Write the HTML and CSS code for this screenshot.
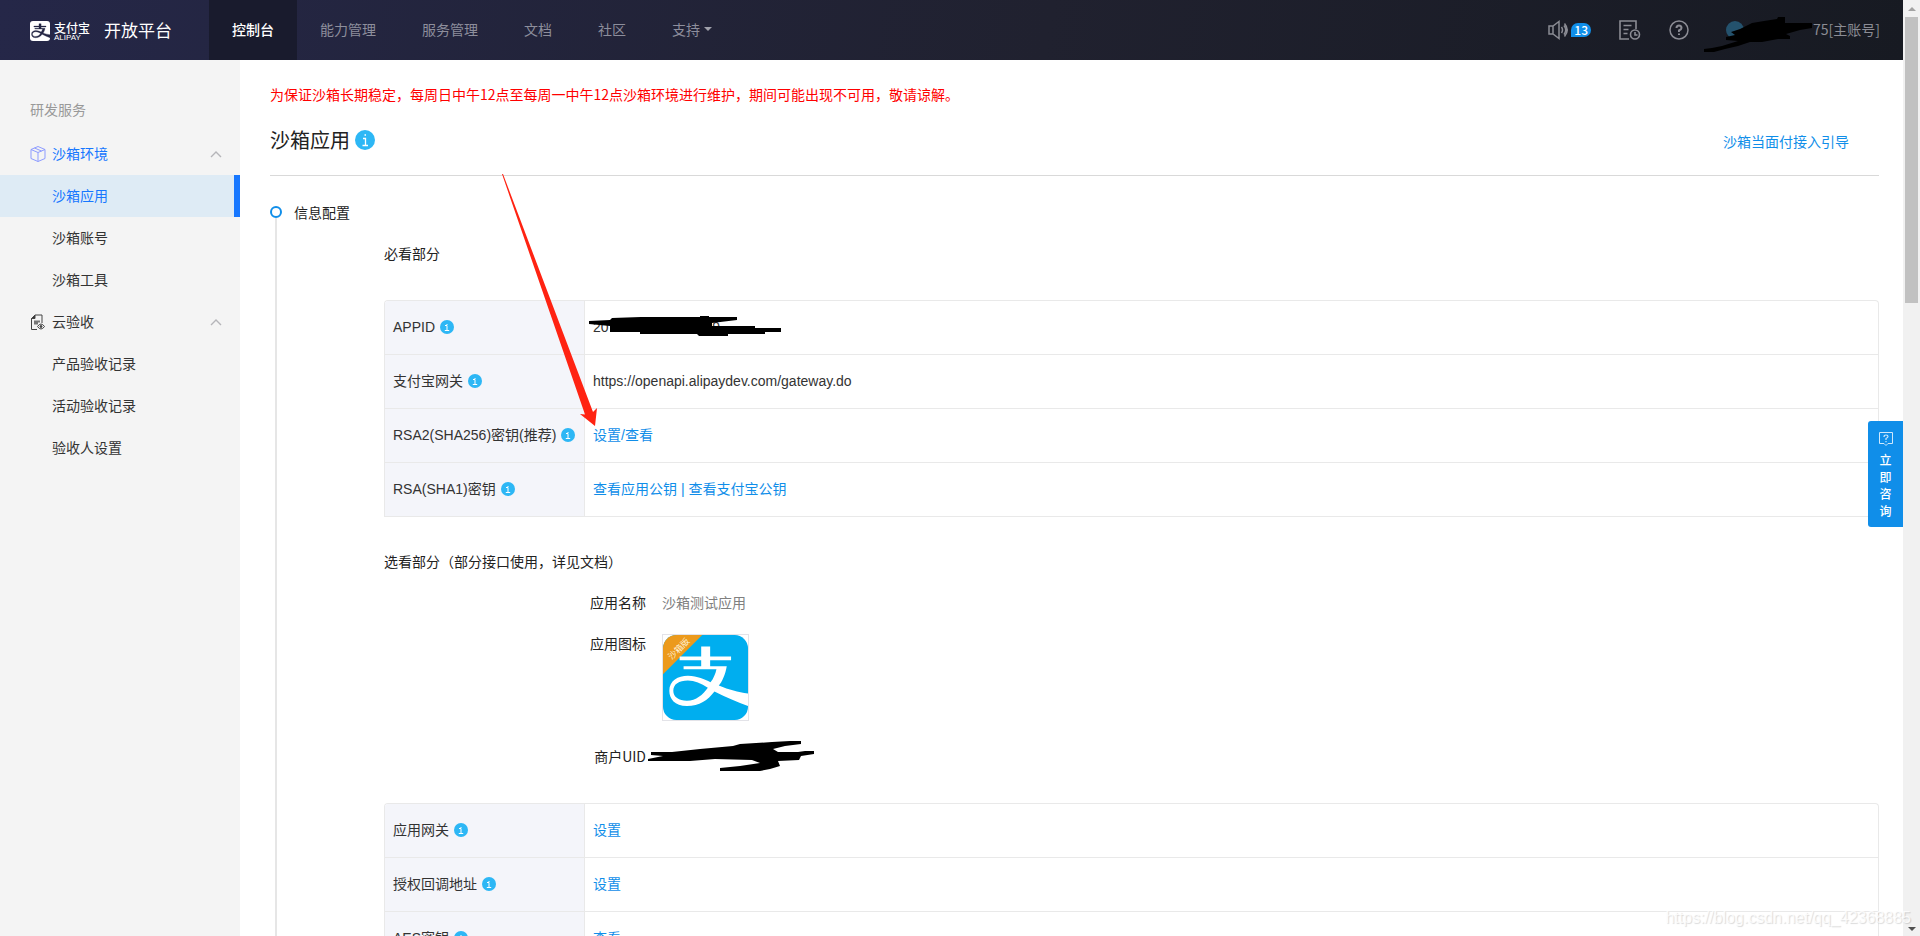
FILE: index.html
```html
<!DOCTYPE html>
<html lang="zh-CN">
<head>
<meta charset="utf-8">
<title>沙箱应用 - 开放平台</title>
<link rel="stylesheet" href="styles.css">
</head>
<body>
<svg class="defs" aria-hidden="true">
  <symbol id="zhi" viewBox="0 0 256 256">
    <path fill-rule="evenodd" d="M115 35H142V65H205V76H142V94H192C188 118 178 142 168 152C200 165 225 172 256 176V214C225 203 190 187 155 170C135 196 110 214 72 214C35 214 19 192 19 168C19 138 45 123 75 123C105 123 125 135 143 142C152 132 158 116 161 103H62V94H115V76H50V65H115ZM135 159C115 146 95 137 75 137C48 137 31 148 31 168C31 187 48 198 72 198C100 198 120 180 135 159Z"/>
  </symbol>
  <symbol id="info" viewBox="0 0 14 14">
    <circle cx="7" cy="7" r="7" fill="#2db7f5"/>
    <path d="M5 5.5h2v5M4.8 10.5h4.4M6.5 4.5h1" fill="none" stroke="#fff"/>
  </symbol>
  <symbol id="up" viewBox="0 0 12 8"><path d="M1 7l5-5 5 5" fill="none" stroke="#b5b5b9" stroke-width="1.4"/></symbol>
</svg>
<div class="window">
  <div class="page">
    <header class="topbar">
      <a class="brand" href="#">
        <svg class="brand-mark" viewBox="0 0 20 20"><rect width="20" height="20" rx="3" fill="#fff"/><use href="#zhi" width="20" height="20" fill="#242644" stroke="#242644" stroke-width="4"/></svg>
        <span class="brand-words"><b>支付宝</b><small>ALIPAY</small></span>
        <span class="brand-title">开放平台</span>
      </a>
      <nav class="nav">
        <a class="active" href="#">控制台</a>
        <a href="#">能力管理</a>
        <a href="#">服务管理</a>
        <a href="#">文档</a>
        <a href="#">社区</a>
        <a href="#">支持<i class="caret"></i></a>
      </nav>
      <div class="tools">
        <button class="tool" aria-label="消息">
          <svg width="21" height="20" viewBox="0 0 21 20" fill="none" stroke="#8b8c94" stroke-width="1.5"><path d="M1 6h4l6-4.500v17L5 14H1zM5 6v8M13.500 7q2 3 0 6M16 5.500q3.500 4.500 0 9M16.500 3.500q5.500 6.500 0 13"/></svg>
          <span class="badge">13</span>
        </button>
        <button class="tool" aria-label="工单">
          <svg width="22" height="20" viewBox="0 0 22 20" fill="none" stroke="#8b8c94" stroke-width="1.600"><path d="M10 19H1V1h16v8M4.500 5.500h8M4.500 9.500h5M4.500 13.500h4"/><circle cx="16" cy="14.500" r="4.500"/><path d="M16 12v3h2.500"/></svg>
        </button>
        <button class="tool" aria-label="帮助">
          <svg width="20" height="20" viewBox="0 0 20 20" fill="none" stroke="#8b8c94" stroke-width="1.500"><circle cx="10" cy="10" r="9"/><path d="M7.500 8q0-2.500 2.500-2.500T12.500 8q0 1.500-2.500 2.500v1.500M10 13.500V15" stroke-width="2"/></svg>
        </button>
        <a class="account" href="#">
          <i class="avatar"></i>
          <span>75[主账号]</span>
          <svg class="scribble scribble-account" viewBox="1700 15 116 40"><path d="M1704 50L1712 49L1722 47L1738 42L1726 41V38L1735 36L1731 33L1740 30L1752 24L1764 22L1777 20L1778 18H1785V24H1812V29L1800 31L1786 35L1790 37V40H1778L1762 43H1750L1738 47L1725 50L1714 53H1704Z"/></svg>
        </a>
      </div>
    </header>
    <div class="body">
      <aside class="sidebar">
        <h2>研发服务</h2>
        <a class="group current" href="#">
          <svg width="16" height="16" viewBox="0 0 16 16" fill="none" stroke="#8d9bff"><path d="M8 .5l7 3v9l-7 3-7-3v-9zM1 3.500l7 3 7-3M8 6.500v9M4.500 2l7 3"/></svg>
          <span>沙箱环境</span><svg class="up"><use href="#up"/></svg>
        </a>
        <a class="item selected" href="#">沙箱应用</a>
        <a class="item" href="#">沙箱账号</a>
        <a class="item" href="#">沙箱工具</a>
        <a class="group" href="#">
          <svg width="16" height="16" viewBox="0 0 16 16" fill="none" stroke="#444"><path d="M7 15.500H1.500V4.500L5 1h7v8"/><path d="M1.500 4.500L5 1v3.500z" fill="#333"/><path d="M4 7.500h6M4 9.500h4" stroke="#777" stroke-width="2"/><path d="M7.500 12.500q3.500-5 7 0-3.500 5-7 0z" fill="#f4f4f4"/><circle cx="11" cy="12.500" r="1" fill="#444"/></svg>
          <span>云验收</span><svg class="up"><use href="#up"/></svg>
        </a>
        <a class="item" href="#">产品验收记录</a>
        <a class="item" href="#">活动验收记录</a>
        <a class="item" href="#">验收人设置</a>
      </aside>
      <main class="content">
        <p class="notice">为保证沙箱长期稳定，每周日中午12点至每周一中午12点沙箱环境进行维护，期间可能出现不可用，敬请谅解。</p>
        <div class="heading">
          <h1>沙箱应用</h1>
          <svg width="20" height="20" viewBox="0 0 20 20"><circle cx="10" cy="10" r="10" fill="#2db7f5"/><path d="M8 8.500h2.500v7M7.500 15.500h5.500M9.500 5h1.500" fill="none" stroke="#fff" stroke-width="1.300"/></svg>
          <a class="guide" href="#">沙箱当面付接入引导</a>
        </div>
        <section class="step">
          <div class="rail"><i class="dot"></i></div>
          <div class="step-main">
            <h2>信息配置</h2>
            <div class="detail">
              <h3>必看部分</h3>
              <div class="frame">
                <table>
                  <tr><th scope="row">APPID<svg class="tip"><use href="#info"/></svg></th><td><span class="masked"><span>20</span><span>89</span><svg class="scribble scribble-appid" viewBox="587 312 196 26"><path d="M589 320L610 319L612 317L641 316H700V315H709V316H737V319L712 322V325H755V327H781V331H765V333H728V335H699L697 333H640V331H610V325L589 323Z"/></svg></span></td></tr>
                  <tr><th scope="row">支付宝网关<svg class="tip"><use href="#info"/></svg></th><td>https://openapi.alipaydev.com/gateway.do</td></tr>
                  <tr><th scope="row">RSA2(SHA256)密钥(推荐)<svg class="tip"><use href="#info"/></svg></th><td><a href="#">设置/查看</a></td></tr>
                  <tr><th scope="row">RSA(SHA1)密钥<svg class="tip"><use href="#info"/></svg></th><td class="links"><a href="#">查看应用公钥</a> | <a href="#">查看支付宝公钥</a></td></tr>
                </table>
              </div>
              <h3 class="optional">选看部分（部分接口使用，详见文档）</h3>
              <dl class="facts">
                <dt>应用名称</dt><dd>沙箱测试应用</dd>
                <dt>应用图标</dt>
                <dd class="icon-cell"><svg class="app-icon" viewBox="0 0 256 256"><defs><clipPath id="round"><rect width="256" height="256" rx="40"/></clipPath></defs><g clip-path="url(#round)"><rect width="256" height="256" fill="#00aeef"/><path d="M0 0H118L0 118Z" fill="#ec9a1c"/><use href="#zhi" width="256" height="256" fill="#fff"/></g><text x="47" y="51" transform="rotate(-45 47 41)" text-anchor="middle">沙箱版</text></svg></dd>
                <dt>商户UID</dt>
                <dd class="uid"><svg class="scribble scribble-uid" viewBox="646 740 170 34"><path d="M651 753H672L700 750L733 747L740 745L772 743L790 742H801V745L785 747L773 750L778 753L798 753L805 752H814V755L801 757L799 761L778 762L780 767L770 770L760 772H720V769L740 767L760 764L752 761L715 760L690 762H648V760L663 757L651 756Z"/></svg></dd>
              </dl>
              <div class="frame">
                <table>
                  <tr><th scope="row">应用网关<svg class="tip"><use href="#info"/></svg></th><td><a href="#">设置</a></td></tr>
                  <tr><th scope="row">授权回调地址<svg class="tip"><use href="#info"/></svg></th><td><a href="#">设置</a></td></tr>
                  <tr><th scope="row">AES密钥<svg class="tip"><use href="#info"/></svg></th><td><a href="#">查看</a></td></tr>
                </table>
              </div>
            </div>
          </div>
        </section>
        <svg class="arrow" viewBox="500 172 98 256"><path d="M502 174H503L593 412L597 408L595 426L580 414L585 414.500Z" fill="#ff2312"/></svg>
      </main>
    </div>
    <button class="consult">
      <svg width="14" height="14" viewBox="0 0 14 14" fill="none" stroke="#cfe8fc"><path d="M.5 .5h13v11H9l-2 2-2-2H.5z"/><path d="M5 5q0-2 2-2t2 1.500q0 1-2 2V8M7 9v1.200" stroke-width="1.200"/></svg>
      <span>立</span><span>即</span><span>咨</span><span>询</span>
    </button>
  </div>
  <div class="scrollbar" aria-hidden="true"><i class="arrow-up"></i><i class="thumb"></i><i class="arrow-down"></i></div>
  <div class="watermark">https://blog.csdn.net/qq_42368885</div>
</div>
</body>
</html>
```
FILE: styles.css
```css
* { box-sizing: border-box; }
body {
  margin: 0;
  font: 400 14px/20px "Noto Sans CJK SC", sans-serif;
  color: #222;
  background: #fff;
}
a { color: #108ee9; text-decoration: none; }
h1, h2, h3, p, dl, dd { margin: 0; font-weight: inherit; }
h2, h3 { font-size: 14px; }
svg { display: block; flex: none; }
button { border: 0; padding: 0; background: none; font: inherit; cursor: pointer; }
.defs { display: none; }

.window { position: relative; display: flex; height: 100vh; overflow: hidden; }
.page { position: relative; flex: 1; display: flex; flex-direction: column; min-width: 0; }

.topbar {
  flex: none;
  display: flex;
  height: 60px;
  background: linear-gradient(100deg, #252748 0%, #20212f 55%, #171a22 100%);
}
.brand { display: flex; align-items: center; width: 209px; padding-left: 30px; color: #fff; }
.brand-mark { width: 20px; height: 20px; margin-top: 2px; }
.brand-words { display: flex; flex-direction: column; margin: 1px 14px 0 4px; }
.brand-words b { font-size: 12px; font-weight: 500; line-height: 13px; }
.brand-words small { font: 8px/7px "Liberation Sans", sans-serif; }
.brand-title { padding-bottom: 1px; font-size: 17px; }
.nav { display: flex; }
.nav a { display: flex; align-items: center; padding: 0 23px 2px; color: #8d8e9c; }
.nav .active { background: #191b2d; color: #fff; font-weight: 500; }
.caret { margin-left: 4px; border: 4px solid transparent; border-top-color: #a0a1ab; border-bottom: 0; }

.tools { display: flex; align-items: center; gap: 28px; margin-left: auto; padding-right: 23px; }
.tool { display: flex; align-items: center; gap: 2px; }
.badge {
  padding: 0 3px;
  border-radius: 7px 7px 7px 0;
  background: #108ee9;
  color: #fff;
  font-size: 12px;
  font-weight: 500;
  line-height: 14px;
}
.account { position: relative; display: flex; align-items: center; justify-content: space-between; width: 154px; margin-left: 9px; color: #8b8c94; }
.account span { padding-bottom: 2px; }
.avatar { width: 18px; height: 18px; border-radius: 50%; background: #24526d; }
.scribble { position: absolute; fill: #000; }
.scribble-account { left: -26px; top: -5px; width: 116px; height: 40px; }

.body { flex: 1; display: flex; min-height: 0; }
.sidebar { flex: none; width: 240px; padding-top: 29px; background: #f4f4f4; }
.sidebar h2 { padding: 10px 30px 12px; margin-bottom: 2px; color: #999; }
.sidebar a { display: flex; align-items: center; height: 42px; color: #333; }
.group { gap: 6px; padding: 0 18px 0 30px; }
.group span { padding-bottom: 2px; }
.up { width: 12px; height: 8px; margin-left: auto; }
.sidebar .item { padding: 0 0 2px 52px; }
.sidebar .current, .sidebar .selected { color: #1677ff; }
.sidebar .selected { background: #deebf5; border-right: 6px solid #1677ff; }

.content { position: relative; flex: 1; min-width: 0; padding: 24px 24px 0 30px; }
.notice { color: #f00; }
.heading { display: flex; align-items: center; height: 72px; border-bottom: 1px solid #d9d9d9; gap: 5px; }
.heading h1 { font-size: 20px; }
.guide { margin: 2px 30px 0 auto; }
.step { display: flex; gap: 12px; padding-top: 26px; }
.rail { display: flex; flex-direction: column; align-items: center; width: 12px; padding-top: 4px; }
.rail::after { content: ""; flex: 1; width: 2px; background: #e6e6e6; }
.dot { width: 12px; height: 12px; border: 2px solid #108ee9; border-radius: 50%; }
.step-main { flex: 1; min-width: 0; }
.detail { margin: 21px 0 0 90px; }
.frame { margin-top: 37px; border: 1px solid #e9e9e9; border-bottom: 0; border-radius: 4px 4px 0 0; overflow: hidden; }
table { width: 100%; border-collapse: separate; border-spacing: 0; table-layout: fixed; font-family: "Liberation Sans", "Noto Sans CJK SC", sans-serif; }
th, td { height: 54px; padding: 0 8px 1px; border-bottom: 1px solid #e9e9e9; text-align: left; font-weight: inherit; white-space: nowrap; color: #333; }
th { width: 200px; background: #f4f5fa; border-right: 1px solid #e9e9e9; }
.tip { display: inline-block; width: 14px; height: 14px; margin-left: 5px; vertical-align: -2px; }
td.links { color: #108ee9; }
.masked { position: relative; display: inline-flex; gap: 96px; }
.scribble-appid { left: -6px; top: -4px; width: 196px; height: 26px; }
.optional { margin-top: 34px; }
.facts { display: grid; grid-template-columns: 262px 1fr; column-gap: 16px; row-gap: 21px; margin-top: 21px; }
.facts dt { text-align: right; }
.facts dd { color: #808080; }
.facts .icon-cell { padding: 1px 0 4px; }
.app-icon { width: 87px; height: 87px; border: 1px solid #e3e3e8; }
.app-icon text { font-size: 26px; fill: #fff3da; }
.uid { position: relative; }
.scribble-uid { left: -16px; top: -7px; width: 170px; height: 34px; }
.arrow { position: absolute; left: 260px; top: 112px; width: 98px; height: 256px; }

.consult {
  position: absolute;
  right: 0;
  top: 45%;
  display: flex;
  flex-direction: column;
  align-items: center;
  width: 35px;
  padding: 11px 0 8px;
  border-radius: 3px 0 0 3px;
  background: #108ee9;
  color: #fff;
  font-size: 12px;
  font-weight: 500;
  line-height: 17px;
}
.consult svg { margin-bottom: 5px; }

.scrollbar { flex: none; display: flex; flex-direction: column; align-items: center; width: 17px; padding: 7px 0 5px; background: #f1f1f1; }
.arrow-up { border: 4px solid transparent; border-top: 0; border-bottom-color: #a3a3a3; }
.thumb { width: 13px; height: 31%; margin-top: 6px; background: #c1c1c1; }
.arrow-down { margin-top: auto; border: 4px solid transparent; border-bottom: 0; border-top-color: #505050; }
.watermark {
  position: absolute;
  right: 9px;
  bottom: 8px;
  font: 16px/20px "Liberation Sans", sans-serif;
  color: rgba(255, 255, 255, .8);
  text-shadow: 1px 1px 1px rgba(0, 0, 0, .15);
}
```
